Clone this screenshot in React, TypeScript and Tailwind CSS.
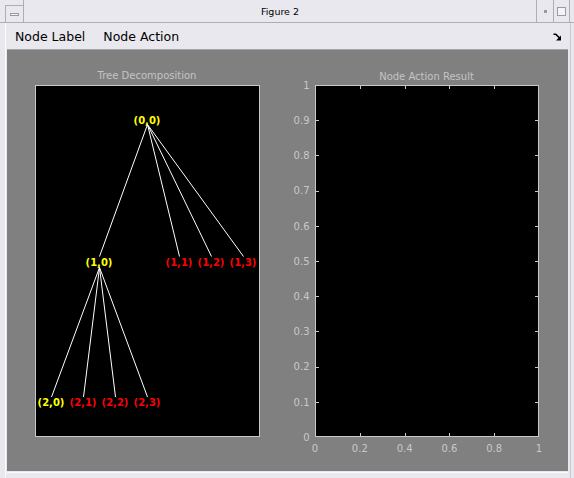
import React from "react";

const L0 = [{ x: 99, c: "#ffff00", t: "(1,0)" }, { x: 179, c: "#ff0000", t: "(1,1)" }, { x: 211, c: "#ff0000", t: "(1,2)" }, { x: 243, c: "#ff0000", t: "(1,3)" }];
const L1 = [{ x: 51, c: "#ffff00", t: "(2,0)" }, { x: 83, c: "#ff0000", t: "(2,1)" }, { x: 115, c: "#ff0000", t: "(2,2)" }, { x: 147, c: "#ff0000", t: "(2,3)" }];

function TreePanel() {
  return (
    <svg width={280} height={421} viewBox="7 50 280 421" className="block shrink-0">
      <text x={147} y={78.5} textAnchor="middle" fontSize={10} fill="#c4c4c4" fontFamily="DejaVu Sans, sans-serif">Tree Decomposition</text>
      <rect x={35.5} y={85.5} width={224} height={351} fill="#000" stroke="#c8c8c8" strokeWidth={1} />
      <g stroke="#ffffff" strokeWidth={1}>
        {L0.map((n) => (
          <line key={n.t} x1={147.5} y1={124.5} x2={n.x + 0.5} y2={256.5} />
        ))}
        {L1.map((n) => (
          <line key={n.t} x1={99.5} y1={267.5} x2={n.x + 0.5} y2={397} />
        ))}
      </g>
      <g fontFamily="DejaVu Sans, sans-serif" fontWeight="bold" fontSize={10} textAnchor="middle">
        <text x={147} y={123.5} fill="#ffff00">(0,0)</text>
        {L0.map((n) => (
          <text key={n.t} x={n.x} y={265.5} fill={n.c}>{n.t}</text>
        ))}
        {L1.map((n) => (
          <text key={n.t} x={n.x} y={406} fill={n.c}>{n.t}</text>
        ))}
      </g>
    </svg>
  );
}

function ResultPanel() {
  const ys = Array.from({ length: 11 }, (_, i) => ({ v: i === 0 ? "0" : i === 10 ? "1" : (i / 10).toFixed(1), y: 437 - 35.2 * i }));
  const xs = Array.from({ length: 6 }, (_, i) => ({ v: i === 0 ? "0" : i === 5 ? "1" : (i / 5).toFixed(1), x: 315 + 44.8 * i }));
  return (
    <svg width={281} height={421} viewBox="287 50 281 421" className="block shrink-0">
      <text x={426.5} y={79.5} textAnchor="middle" fontSize={10} fill="#c4c4c4" fontFamily="DejaVu Sans, sans-serif">Node Action Result</text>
      <rect x={315.5} y={85.5} width={223} height={351} fill="#000" stroke="#c8c8c8" strokeWidth={1} />
      <g stroke="#c8c8c8" strokeWidth={1}>
        {ys.slice(1, 10).map((t) => (
          <React.Fragment key={t.v}>
            <line x1={316} y1={Math.round(t.y) + 0.5} x2={319} y2={Math.round(t.y) + 0.5} />
            <line x1={535} y1={Math.round(t.y) + 0.5} x2={538} y2={Math.round(t.y) + 0.5} />
          </React.Fragment>
        ))}
        {xs.slice(1, 5).map((t) => (
          <React.Fragment key={t.v}>
            <line x1={Math.round(t.x) + 0.5} y1={86} x2={Math.round(t.x) + 0.5} y2={89} />
            <line x1={Math.round(t.x) + 0.5} y1={433} x2={Math.round(t.x) + 0.5} y2={436} />
          </React.Fragment>
        ))}
      </g>
      <g fontFamily="DejaVu Sans, sans-serif" fontSize={10} fill="#c8c8c8">
        {ys.map((t) => (
          <text key={t.v} x={309.5} y={t.y + 3.7} textAnchor="end">{t.v}</text>
        ))}
        {xs.map((t) => (
          <text key={t.v} x={t.x} y={451.5} textAnchor="middle">{t.v}</text>
        ))}
      </g>
    </svg>
  );
}

export default function App() {
  return (
    <div className="w-[574px] h-[478px] bg-[#e9e8ee] overflow-hidden flex flex-col font-['DejaVu_Sans',sans-serif] text-black">
      {/* Title bar */}
      <div className="h-[23px] flex border-b border-[#aeadb3] shrink-0">
        <div className="w-[5px]" />
        <div className="w-[18px] mt-[5px] border-l border-t border-[#aeadb3] flex items-center justify-center">
          <div className="w-[9px] h-[3px] border border-[#9a9aa0] bg-[#f4f4f6] mt-[1px]" />
        </div>
        <div className="flex-1 border-l border-[#aeadb3] flex items-center justify-center pt-[1px]">
          <span className="text-[9.5px] leading-none">Figure 2</span>
        </div>
        <div className="w-[17px] border-l border-[#aeadb3] flex items-center justify-center">
          <div className="w-[3px] h-[3px] bg-[#9a9aa0] mt-[1px]" />
        </div>
        <div className="w-[17px] border-l border-r border-[#aeadb3] flex items-center justify-center">
          <div className="w-[9px] h-[9px] border border-[#9a9aa0] bg-[#f4f4f6] mt-[1px]" />
        </div>
        <div className="w-[4px]" />
      </div>
      {/* Body */}
      <div className="flex flex-1 min-h-0">
        <div className="w-[5px] shrink-0" />
        <div className="w-[1px] bg-[#fbfbfc] shrink-0" />
        <div className="w-[1px] shrink-0" />
        <div className="w-[561px] flex flex-col shrink-0">
          <div className="h-[26px] flex items-center relative shrink-0 pt-[2px]">
            <span className="ml-[8px] text-[12.5px] leading-none">Node Label</span>
            <span className="ml-[18px] text-[12.5px] leading-none">Node Action</span>
            <svg width={10} height={10} viewBox="0 0 10 10" className="absolute left-[546px] top-[10px]">
              <path d="M0.5 1.2 H2.8 L6.6 5" stroke="#000" strokeWidth={1.6} fill="none" />
              <polygon points="8,2.6 8,7.6 3,7.6" fill="#000" />
            </svg>
          </div>
          <div className="h-[1px] bg-[#a5a4aa] shrink-0" />
          <div className="h-[421px] bg-[#808080] flex shrink-0">
            <TreePanel />
            <ResultPanel />
          </div>
          <div className="h-[1px] shrink-0" />
          <div className="h-[1px] bg-[#fbfbfc] shrink-0" />
        </div>
        <div className="w-[2px] shrink-0" />
        <div className="w-[1px] bg-[#c9c8ce] shrink-0" />
      </div>
    </div>
  );
}
